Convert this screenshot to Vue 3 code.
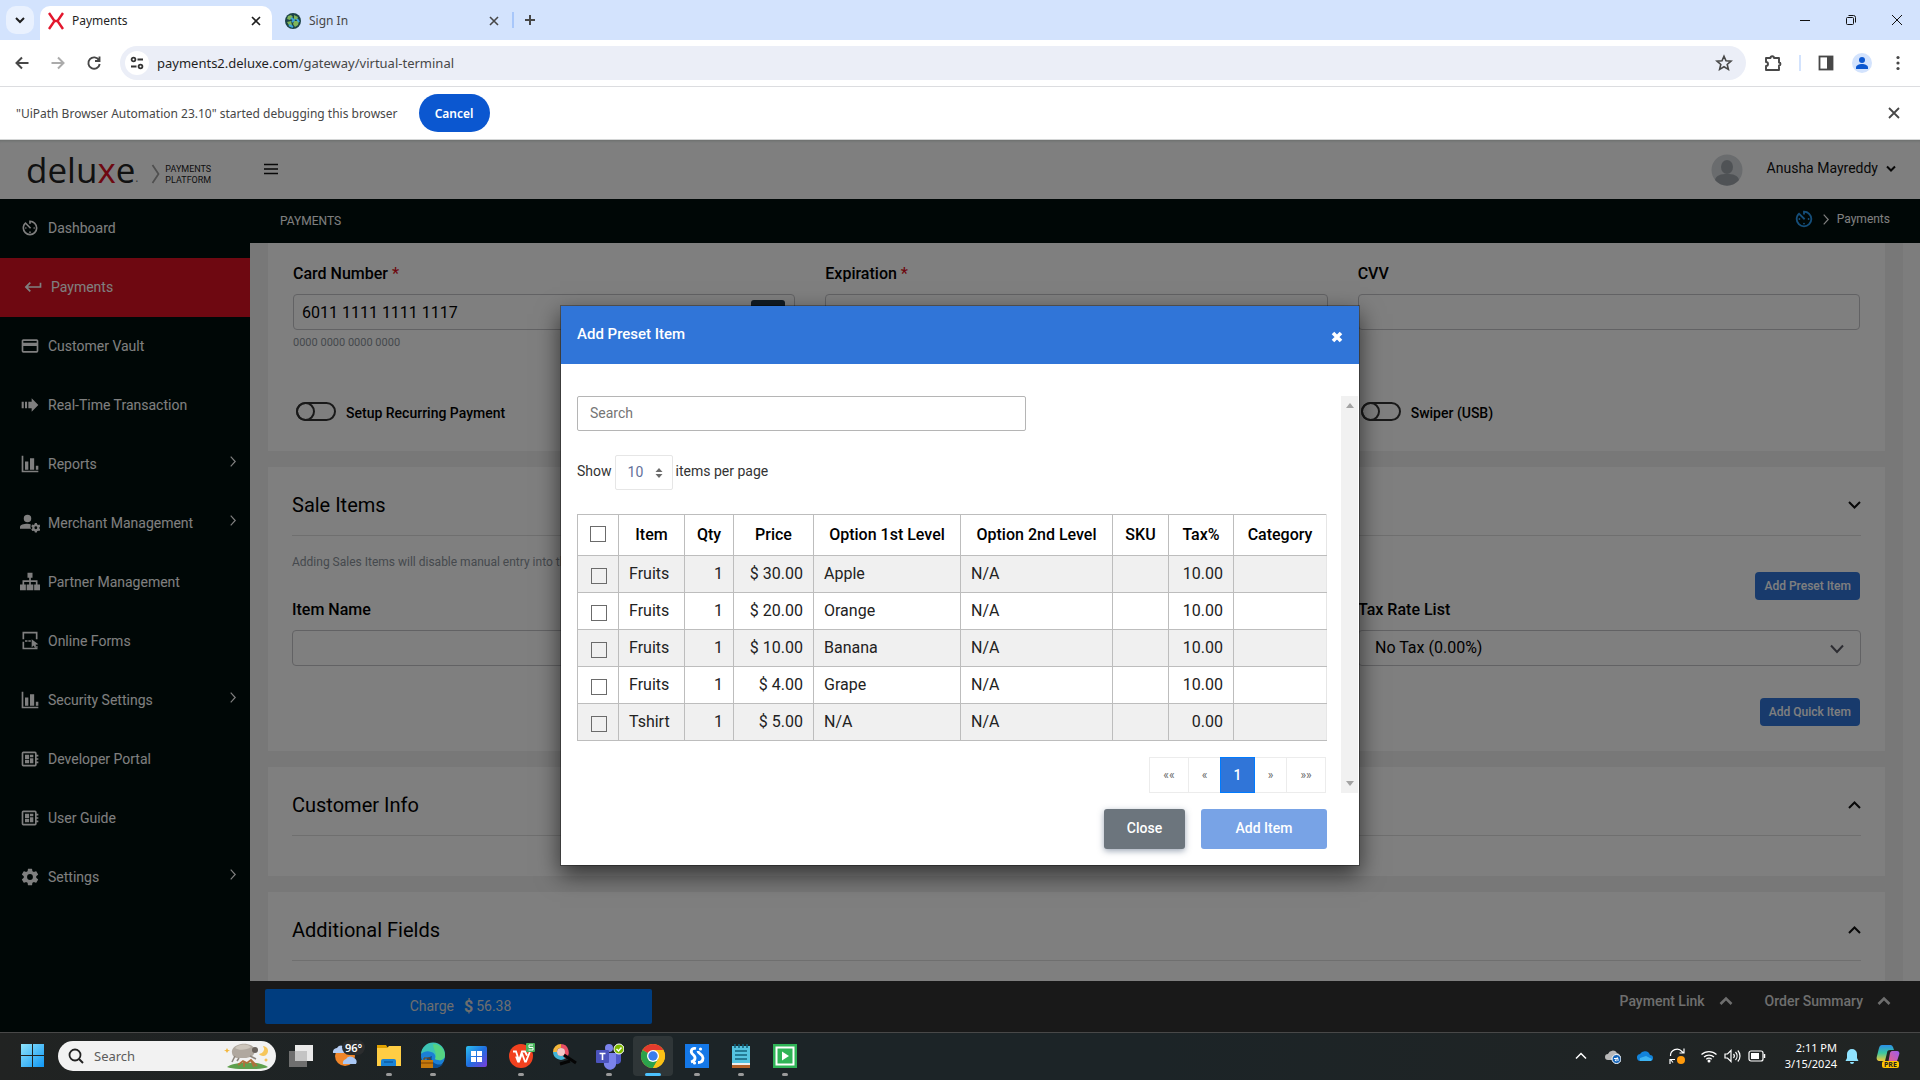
<script setup>
import { ref } from 'vue'

const timerPath = 'M11 17a1 1 0 0 0 1 1 1 1 0 0 0 1-1 1 1 0 0 0-1-1 1 1 0 0 0-1 1m0-14v4h2V5.08c3.39.49 6 3.39 6 6.92a7 7 0 0 1-7 7 7 7 0 0 1-7-7c0-1.68.59-3.22 1.58-4.42L12 13l1.41-1.41-6.8-6.8v.02C4.42 6.45 3 9.05 3 12a9 9 0 0 0 9 9 9 9 0 0 0 9-9 9 9 0 0 0-9-9m6 9a1 1 0 0 0-1-1 1 1 0 0 0-1 1 1 1 0 0 0 1 1 1 1 0 0 0 1-1M6 12a1 1 0 0 0 1 1 1 1 0 0 0 1-1 1 1 0 0 0-1-1 1 1 0 0 0-1 1z'
const cardPath = 'M20 8H4V6h16m0 12H4v-6h16m0-8H4c-1.11 0-2 .89-2 2v12a2 2 0 0 0 2 2h16a2 2 0 0 0 2-2V6c0-1.11-.89-2-2-2z'
const returnPath = 'M20 7v4H6l3.500-3.500L8 6l-6 6 6 6 1.500-1.500L6 13h16V7z'
const stepPath = 'M2 8h2.500v8H2zM6 8h2.500v8H6zM10 8h4V4l8 8-8 8v-4h-4z'
const chartPath = 'M2 2h2v18h18v2H2zM6 9h4v10H6zM12 5h5v14h-5zM19 14h3v5h-3z'
const userCogPath = 'M9 2a4.500 4.500 0 1 1 0 9 4.500 4.500 0 0 1 0-9zM9 13c1.500 0 3 .2 4 .7-.6 1.500-.7 3.800.3 5.300H0v-2c0-2.700 4.500-4 9-4zM17.800 12h2.400l.3 1.600 1.300.7 1.500-.5 1.200 2.100-1.200 1.100v1.500l1.200 1.100-1.200 2.100-1.500-.5-1.300.7-.3 1.600h-2.400l-.3-1.600-1.300-.7-1.500.5-1.200-2.100 1.200-1.100V17l-1.200-1.100 1.200-2.100 1.500.5 1.300-.7zM19 16a1.700 1.700 0 1 0 0 3.400 1.700 1.700 0 0 0 0-3.400z'
const sitemapPath = 'M9 1h6v6h-2v3h8v5h3v7h-7v-7h2v-3h-6v3h3v7H8v-7h3v-3H5v3h2v7H0v-7h3v-5h8V7H9z'
const formPath = 'M3 1h18v9h-2V3H5v7H3zM3 13h2v7h14v-2h2v4H3zM6 11h3v2H6zM10 11h3v2h-3zM14 10l8 6-3.500.5 1.500 3-2 1-1.500-3-2.500 2z'
const boardPath = 'M22 9V7h-2V5a2 2 0 0 0-2-2H4a2 2 0 0 0-2 2v14a2 2 0 0 0 2 2h14a2 2 0 0 0 2-2v-2h2v-2h-2v-2h2v-2h-2V9h2m-4 10H4V5h14v14M6 13h5v4H6v-4m6-6h4v3h-4V7M6 7h5v5H6V7m6 4h4v6h-4v-6z'
const cogPath = 'M12 15.5A3.5 3.5 0 0 1 8.5 12 3.5 3.5 0 0 1 12 8.500a3.5 3.5 0 0 1 3.5 3.5 3.5 3.5 0 0 1-3.5 3.500m7.430-2.530c.04-.32.07-.64.07-.97 0-.33-.03-.66-.07-1l2.110-1.630c.19-.15.24-.42.12-.64l-2-3.460c-.12-.22-.39-.31-.61-.22l-2.490 1c-.52-.39-1.060-.73-1.690-.98l-.37-2.650A.506.506 0 0 0 14 2h-4c-.25 0-.46.18-.5.42l-.37 2.650c-.63.25-1.170.59-1.690.98l-2.490-1c-.22-.09-.49 0-.61.22l-2 3.460c-.13.22-.07.49.12.64L4.570 11c-.04.34-.07.67-.07 1 0 .33.03.65.07.97l-2.110 1.660c-.19.15-.25.42-.12.64l2 3.460c.12.22.39.3.61.22l2.490-1.010c.52.4 1.060.74 1.690.99l.37 2.650c.04.24.25.42.5.42h4c.25 0 .46-.18.5-.42l.37-2.650c.63-.26 1.170-.59 1.690-.99l2.490 1.010c.22.08.49 0 .61-.22l2-3.460c.12-.22.07-.49-.12-.64l-2.110-1.660z'

const menu = [
  { label: 'Dashboard', icon: timerPath },
  { label: 'Payments', icon: returnPath, active: true },
  { label: 'Customer Vault', icon: cardPath },
  { label: 'Real-Time Transaction', icon: stepPath },
  { label: 'Reports', icon: chartPath, sub: true },
  { label: 'Merchant Management', icon: userCogPath, sub: true },
  { label: 'Partner Management', icon: sitemapPath },
  { label: 'Online Forms', icon: formPath },
  { label: 'Security Settings', icon: chartPath, sub: true },
  { label: 'Developer Portal', icon: boardPath },
  { label: 'User Guide', icon: boardPath },
  { label: 'Settings', icon: cogPath, sub: true },
]

const items = ref([
  { name: 'Fruits', qty: 1, price: '$ 30.00', first: 'Apple', second: 'N/A', sku: '', tax: '10.00', category: '', picked: false },
  { name: 'Fruits', qty: 1, price: '$ 20.00', first: 'Orange', second: 'N/A', sku: '', tax: '10.00', category: '', picked: false },
  { name: 'Fruits', qty: 1, price: '$ 10.00', first: 'Banana', second: 'N/A', sku: '', tax: '10.00', category: '', picked: false },
  { name: 'Fruits', qty: 1, price: '$ 4.00', first: 'Grape', second: 'N/A', sku: '', tax: '10.00', category: '', picked: false },
  { name: 'Tshirt', qty: 1, price: '$ 5.00', first: 'N/A', second: 'N/A', sku: '', tax: '0.00', category: '', picked: false },
])
const cardNumber = ref('6011 1111 1111 1117')
const search = ref('')
</script>

<template>
  <div class="screen">
    <div class="tabstrip">
      <button class="tab-search" aria-label="Search tabs">
        <svg width="10" height="10" viewBox="0 0 10 10"><path d="M1 3l4 4 4-4" fill="none" stroke="#1f1f1f" stroke-width="2" /></svg>
      </button>
      <div class="tab current">
        <svg width="16" height="18" viewBox="0 0 16 18"><path d="M1 1l5.500 8L1 17M15 1L9.500 9l5.500 8M6 9h4" fill="none" stroke="#e3172d" stroke-width="2.400" /></svg>
        <span>Payments</span>
        <button aria-label="Close tab"><svg width="10" height="10" viewBox="0 0 10 10"><path d="M1 1l8 8M9 1L1 9" stroke="#1f1f1f" stroke-width="1.600" /></svg></button>
      </div>
      <div class="tab">
        <svg width="16" height="16" viewBox="0 0 16 16">
          <circle cx="8" cy="8" r="8" fill="#1d4448" />
          <path d="M3 3l3-1 2 2-3 3-3-1zM9 2l4 2-1 3-3-1zM2 9l4-1 1 4-2 2zM9 8l5 0-1 4-3 2-2-3z" fill="#7fb55a" />
          <path d="M6 5l3 2-2 2M12 6l2 3M4 12l4 2" stroke="#3da5dc" stroke-width="2" fill="none" />
        </svg>
        <span>Sign In</span>
        <button aria-label="Close tab"><svg width="10" height="10" viewBox="0 0 10 10"><path d="M1 1l8 8M9 1L1 9" stroke="#474747" stroke-width="1.600" /></svg></button>
      </div>
      <i class="tab-sep"></i>
      <button class="new-tab" aria-label="New tab"><svg width="12" height="12" viewBox="0 0 12 12"><path d="M6 1v10M1 6h10" stroke="#474747" stroke-width="2" /></svg></button>
      <div class="win-controls">
        <svg width="10" height="10" viewBox="0 0 10 10"><path d="M0 5.500h10" stroke="#111" /></svg>
        <svg width="10" height="10" viewBox="0 0 10 10"><path d="M.5 3.500a1 1 0 0 1 1-1h5a1 1 0 0 1 1 1v5a1 1 0 0 1-1 1h-5a1 1 0 0 1-1-1zM2.500.5h5a2 2 0 0 1 2 2v5" fill="none" stroke="#111" /></svg>
        <svg width="10" height="10" viewBox="0 0 10 10"><path d="M0 0l10 10M10 0L0 10" stroke="#111" /></svg>
      </div>
    </div>

    <div class="toolbar">
      <svg width="16" height="16" viewBox="0 0 16 16"><path d="M14.500 8H3M8 2.500L2.500 8 8 13.500" fill="none" stroke="#474747" stroke-width="2" /></svg>
      <svg width="16" height="16" viewBox="0 0 16 16"><path d="M1.500 8H13M8 2.500L13.500 8 8 13.500" fill="none" stroke="#ababab" stroke-width="2" /></svg>
      <svg width="16" height="16" viewBox="0 0 16 16"><path d="M13 5.200A5.700 5.700 0 1 0 13.700 9M13.500 1.500v4.500H9" fill="none" stroke="#474747" stroke-width="1.900" /></svg>
      <div class="omnibox">
        <span class="site-info">
          <svg width="14" height="14" viewBox="0 0 14 14"><g fill="none" stroke="#333" stroke-width="1.800"><circle cx="3.500" cy="3.500" r="1.900" /><path d="M7.500 3.500H13M1 10.500h5.500" /><circle cx="10.500" cy="10.500" r="1.900" /></g></svg>
        </span>
        <span class="url"><b>payments2.deluxe.com</b>/gateway/virtual-terminal</span>
        <svg width="18" height="18" viewBox="0 0 18 18"><path d="M9 2.200l2 4.600 5 .4-3.800 3.300 1.200 4.900L9 12.800l-4.400 2.600 1.200-4.900L2 7.200l5-.4z" fill="none" stroke="#474747" stroke-width="1.600" /></svg>
      </div>
      <div class="tools">
        <svg width="18" height="18" viewBox="0 0 18 18"><path d="M2 4h4.500a1.700 1.700 0 0 1 3.500 0h5v4.500a1.500 1.500 0 0 1 0 3V16H2v-4a2 2 0 0 0 0-4z" fill="none" stroke="#474747" stroke-width="1.900" stroke-linejoin="round" /></svg>
        <i class="tool-sep"></i>
        <svg width="16" height="16" viewBox="0 0 16 16"><rect x="1.500" y="1.500" width="13" height="13" fill="none" stroke="#474747" stroke-width="1.800" /><path d="M9 1h6v14H9z" fill="#474747" /></svg>
        <svg width="20" height="20" viewBox="0 0 20 20"><circle cx="10" cy="10" r="10" fill="#d3e3fd" /><circle cx="10" cy="7" r="3" fill="#0b57d0" /><path d="M4 16v-1.500c0-2 3-3.500 6-3.500s6 1.500 6 3.500V16z" fill="#0b57d0" /></svg>
        <svg width="16" height="16" viewBox="0 0 16 16"><g fill="#474747"><circle cx="8" cy="2.500" r="1.600" /><circle cx="8" cy="8" r="1.600" /><circle cx="8" cy="13.500" r="1.600" /></g></svg>
      </div>
    </div>

    <div class="infobar">
      <span>"UiPath Browser Automation 23.10" started debugging this browser</span>
      <button class="cancel">Cancel</button>
      <button class="info-close" aria-label="Dismiss"><svg width="12" height="12" viewBox="0 0 12 12"><path d="M1 1l10 10M11 1L1 11" stroke="#474747" stroke-width="1.800" /></svg></button>
    </div>

    <div class="page">
      <header class="site-head">
        <div class="brand">
          <span class="word">delu<em>x</em>e</span><sup>.</sup>
          <svg width="10" height="20" viewBox="0 0 10 20"><path d="M1.500 1l6 9-6 9" fill="none" stroke="#a0a0a0" stroke-width="1.800" /></svg>
          <span class="platform">PAYMENTS<br>PLATFORM</span>
        </div>
        <button class="burger" aria-label="Toggle menu"><svg width="14" height="12" viewBox="0 0 14 12"><path d="M0 1.500h14M0 6h14M0 10.500h14" stroke="#111" stroke-width="1.600" /></svg></button>
        <div class="account">
          <svg width="32" height="32" viewBox="0 0 32 32"><circle cx="16" cy="16" r="15.500" fill="#d4d8dc" /><ellipse cx="16" cy="13" rx="6" ry="7" fill="#9fa5ab" /><path d="M4 26c1-5 6-6 12-6s11 1 12 6a15.500 15.500 0 0 1-24 0z" fill="#9fa5ab" /></svg>
          <span>Anusha Mayreddy</span>
          <svg class="caret" width="10" height="8" viewBox="0 0 10 8"><path d="M1 1.500l4 4 4-4" fill="none" stroke="#111" stroke-width="2" /></svg>
        </div>
      </header>

      <div class="columns">
        <nav class="sidebar">
          <a v-for="m in menu" :key="m.label" href="#" :class="{ active: m.active }">
            <svg width="20" height="20" viewBox="0 0 24 24"><path :d="m.icon" fill="currentColor" fill-rule="evenodd" /></svg>
            <span>{{ m.label }}</span>
            <svg v-if="m.sub" class="arrow" width="6" height="11" viewBox="0 0 6 11"><path d="M.7.7l4.500 4.800L.7 10.300" fill="none" stroke="currentColor" stroke-width="1.200" /></svg>
          </a>
        </nav>

        <main class="main">
          <div class="crumbs">
            <span>PAYMENTS</span>
            <div class="trail">
              <svg width="22" height="22" viewBox="0 0 24 24"><path :d="timerPath" fill="#2a9df4" /></svg>
              <svg width="6" height="11" viewBox="0 0 6 11"><path d="M.7.7l4.500 4.800L.7 10.300" fill="none" stroke="#fff" stroke-width="1.200" /></svg>
              <a href="#">Payments</a>
            </div>
          </div>

          <div class="scroller">
            <div class="cards">
              <section class="card card-pay">
                <div class="grid">
                  <div class="field">
                    <label for="cc">Card Number <em>*</em></label>
                    <div class="with-brand"><input id="cc" v-model="cardNumber" type="text"><i class="brand-chip"></i></div>
                    <small>0000 0000 0000 0000</small>
                  </div>
                  <div class="field">
                    <label for="exp">Expiration <em>*</em></label>
                    <input id="exp" type="text">
                  </div>
                  <div class="field">
                    <label for="cvv">CVV</label>
                    <input id="cvv" type="text">
                  </div>
                </div>
                <div class="grid toggles">
                  <label class="toggle"><input type="checkbox"><i></i><span>Setup Recurring Payment</span></label>
                  <div></div>
                  <label class="toggle"><input type="checkbox"><i></i><span>Swiper (USB)</span></label>
                </div>
              </section>

              <section class="card card-sale">
                <div class="card-head">
                  <h2>Sale Items</h2>
                  <svg width="14" height="10" viewBox="0 0 14 10"><path d="M2 2l5.500 5.500L13 2" fill="none" stroke="#111" stroke-width="2" /></svg>
                </div>
                <p class="hint">Adding Sales Items will disable manual entry into the amount field.</p>
                <div class="actions"><button class="btn-sm">Add Preset Item</button></div>
                <div class="grid">
                  <div class="field">
                    <label for="iname">Item Name</label>
                    <input id="iname" type="text">
                  </div>
                  <div></div>
                  <div class="field">
                    <label for="taxrate">Tax Rate List</label>
                    <div class="select-wrap">
                      <select id="taxrate"><option>No Tax (0.00%)</option></select>
                      <svg width="14" height="10" viewBox="0 0 14 10"><path d="M1 1.500l6 6.500 6-6.500" fill="none" stroke="#5a5a64" stroke-width="2" /></svg>
                    </div>
                  </div>
                </div>
                <div class="actions quick"><button class="btn-sm">Add Quick Item</button></div>
              </section>

              <section class="card card-info">
                <div class="card-head">
                  <h2>Customer Info</h2>
                  <svg width="14" height="10" viewBox="0 0 14 10"><path d="M2 8l5.500-5.500L13 8" fill="none" stroke="#111" stroke-width="2" /></svg>
                </div>
              </section>

              <section class="card card-info">
                <div class="card-head">
                  <h2>Additional Fields</h2>
                  <svg width="14" height="10" viewBox="0 0 14 10"><path d="M2 8l5.500-5.500L13 8" fill="none" stroke="#111" stroke-width="2" /></svg>
                </div>
              </section>
            </div>
            <div class="page-track"></div>
          </div>

          <footer class="paybar">
            <button class="charge"><span>Charge</span><b>$</b><span>56.38</span></button>
            <div class="pay-links">
              <a href="#">Payment Link <svg width="14" height="10" viewBox="0 0 14 10"><path d="M1.500 8L7 2.500 12.500 8" fill="none" stroke="currentColor" stroke-width="2.600" /></svg></a>
              <a href="#">Order Summary <svg width="14" height="10" viewBox="0 0 14 10"><path d="M1.500 8L7 2.500 12.500 8" fill="none" stroke="currentColor" stroke-width="2.600" /></svg></a>
            </div>
          </footer>
        </main>
      </div>

      <div class="backdrop">
        <div class="modal" role="dialog" aria-labelledby="dlg-title">
          <div class="modal-head">
            <h1 id="dlg-title">Add Preset Item</h1>
            <button aria-label="Close dialog"><svg width="12" height="12" viewBox="0 0 12 12"><path d="M2 2l8 8M10 2l-8 8" stroke="#fff" stroke-width="3.600" /></svg></button>
          </div>
          <div class="modal-body">
            <div class="modal-content">
              <input v-model="search" class="search" type="text" placeholder="Search" aria-label="Search">
              <div class="per-page">
                <label for="pp">Show</label>
                <span class="pp-wrap">
                  <select id="pp"><option>10</option></select>
                  <svg width="8" height="10" viewBox="0 0 8 10"><path d="M4 0l3.500 4h-7zM4 10L.5 6h7z" fill="#6b6b6b" /></svg>
                </span>
                <label for="pp">items per page</label>
              </div>
              <table>
                <colgroup><col class="c1"><col class="c2"><col class="c3"><col class="c4"><col class="c5"><col class="c6"><col class="c7"><col class="c8"><col></colgroup>
                <thead>
                  <tr>
                    <th><input type="checkbox" aria-label="Select all"></th>
                    <th>Item</th><th>Qty</th><th>Price</th><th>Option 1st Level</th><th>Option 2nd Level</th><th>SKU</th><th>Tax%</th><th>Category</th>
                  </tr>
                </thead>
                <tbody>
                  <tr v-for="(it, i) in items" :key="i">
                    <td class="tick"><input v-model="it.picked" type="checkbox" :aria-label="'Select ' + it.first"></td>
                    <td>{{ it.name }}</td>
                    <td class="num">{{ it.qty }}</td>
                    <td class="num">{{ it.price }}</td>
                    <td>{{ it.first }}</td>
                    <td>{{ it.second }}</td>
                    <td>{{ it.sku }}</td>
                    <td class="num">{{ it.tax }}</td>
                    <td>{{ it.category }}</td>
                  </tr>
                </tbody>
              </table>
              <div class="pager">
                <button class="wide">««</button><button>«</button><button class="on">1</button><button>»</button><button class="wide">»»</button>
              </div>
            </div>
            <div class="track">
              <svg width="8" height="5" viewBox="0 0 8 5"><path d="M4 0l4 5H0z" fill="#a3a3a3" /></svg>
              <svg width="8" height="5" viewBox="0 0 8 5"><path d="M0 0h8L4 5z" fill="#a3a3a3" /></svg>
            </div>
          </div>
          <div class="modal-foot">
            <button class="close-btn">Close</button>
            <button class="add-btn">Add Item</button>
          </div>
        </div>
      </div>
    </div>

    <div class="taskbar">
      <div class="start">
        <svg width="24" height="24" viewBox="0 0 24 24">
          <defs><linearGradient id="win" x1="0" y1="0" x2="1" y2="1"><stop offset="0" stop-color="#8fe4fb" /><stop offset="1" stop-color="#0f97f5" /></linearGradient></defs>
          <path d="M0 0h11v11H0zM12 0h11v11H12zM0 12h11v11H0zM12 12h11v11H12z" fill="url(#win)" />
        </svg>
      </div>
      <label class="task-search">
        <svg width="16" height="16" viewBox="0 0 16 16"><circle cx="7" cy="7" r="5.500" fill="none" stroke="#222" stroke-width="1.800" /><path d="M11 11l4 4" stroke="#222" stroke-width="2" /></svg>
        <input type="text" placeholder="Search" aria-label="Search Windows">
        <svg width="50" height="26" viewBox="0 0 50 26">
          <path d="M3 24c8-6 32-6 41 0-6 3-34 3-41 0z" fill="#5fa04d" />
          <path d="M39 3a5 5 0 1 1-4 8 5 5 0 0 0 4-8z" fill="#f6c65b" />
          <path d="M3 5l1 2 2 .5-2 .7L3 10l-1-1.800L0 7.500 2 7zM42 15l.8 1.500 1.600.4-1.600.5L42 19l-.8-1.600-1.600-.5 1.600-.4z" fill="#f3b63b" />
          <path d="M8 10c-1-5 4-8 9-9 6-1 13 1 14 6 0 6-5 8-11 8S9 16 8 10z" fill="#b0a89f" />
          <path d="M11 5c3-4 12-5 16-1-4 3-12 4-16 1z" fill="#cdc6bc" />
          <circle cx="31" cy="7" r="3" fill="#6a625c" />
          <path d="M11 13l-3 6M15 15l-2 3M26 13l6 3" stroke="#8f877f" stroke-width="1.600" />
          <path d="M14 22l5-4 4 2 4-3 6 6M20 19v5M27 17l3 7" stroke="#b0703c" stroke-width="1.800" fill="none" />
        </svg>
      </label>
      <div class="apps">
        <span class="app"><svg width="28" height="28" viewBox="0 0 28 28"><path d="M8 3h18v16H8z" fill="#e9e9e9" /><path d="M2 9h18v16H2z" fill="#6f6f6f" /><path d="M8 9h12v10H8z" fill="#c4c4c4" /></svg></span>
        <span class="app weather">
          <svg width="28" height="28" viewBox="0 0 28 28"><circle cx="14" cy="14" r="10" fill="#f0862a" /><path d="M2 11a4 4 0 0 1 4-5 5 5 0 0 1 9 1v4z" fill="#b5cdf3" /><path d="M12 22a4 4 0 0 1 3-5 5 5 0 0 1 8-1 4 4 0 0 1 2 6z" fill="#a9c7f5" /></svg>
          <b>96°</b>
        </span>
        <span class="app run"><svg width="28" height="28" viewBox="0 0 28 28"><path d="M2 3h9l2 3h-9v4H2z" fill="#e0a100" /><path d="M2 6h10l2-2h12v20H2z" fill="#ffcd44" /><path d="M6 24v-5a2 2 0 0 1 2-2h11a2 2 0 0 1 2 2v5z" fill="#1a83d6" /><path d="M9 20h9" stroke="#0c5ca3" stroke-width="1.500" /></svg></span>
        <span class="app run">
          <svg width="28" height="28" viewBox="0 0 28 28"><circle cx="14" cy="14" r="12" fill="#1b7fd6" /><path d="M2 12a12 12 0 0 1 24 1c0 6-7 6-10 4 3-6-8-11-14-5z" fill="#3cc3b4" /><path d="M14 2a12 12 0 0 1 12 11c0 6-7 6-10 4 3-6-2-9-2-15z" fill="#5fdc6c" opacity=".7" /><path d="M13 14c-2 6 4 10 11 8-6 8-18 3-16-6z" fill="#0c4f94" /><path d="M2 18h12v8H2z" fill="#c4790d" /><path d="M5 18v-2h6v2M2 21h12" stroke="#7d4300" fill="none" /></svg>
        </span>
        <span class="app"><svg width="28" height="28" viewBox="0 0 28 28"><defs><linearGradient id="sto" x1="0" y1="0" x2="1" y2="1"><stop offset="0" stop-color="#2dc0f0" /><stop offset=".5" stop-color="#1f6fe0" /><stop offset="1" stop-color="#7d3cd8" /></linearGradient></defs><rect x="3" y="4" width="21" height="21" rx="2" fill="url(#sto)" /><path d="M8 9h5v5H8zM14 9h5v5h-5zM8 15h5v5H8zM14 15h5v5h-5z" fill="#fff" /></svg></span>
        <span class="app run"><svg width="28" height="28" viewBox="0 0 28 28"><circle cx="14" cy="14" r="12" fill="#f2411f" /><path d="M6 9.500h3l3 9 3-9h3l2 4M9 14.500l2 5h1l3-8 3 8h1l4-10" fill="none" stroke="#fff" stroke-width="1.800" /><rect x="19" y="1" width="9" height="9" rx="1" fill="#49b45c" /><path d="M26 3h-4v2.500h4V8h-4.500" fill="none" stroke="#fff" /></svg></span>
        <span class="app"><svg width="28" height="28" viewBox="0 0 28 28"><path d="M4 10a6 6 0 0 1 6-6" stroke="#f4b63a" stroke-width="4" fill="none" /><path d="M10 4a6 6 0 0 1 3 11" stroke="#e94f64" stroke-width="4" fill="none" /><path d="M4 10a6 6 0 0 0 9 5" stroke="#42b3d5" stroke-width="4" fill="none" /><circle cx="10" cy="10" r="4" fill="#f3c9c9" /><path d="M13 13l12 8M9 22l10-3" stroke="#050505" stroke-width="3" /></svg></span>
        <span class="app run"><svg width="30" height="28" viewBox="0 0 30 28"><circle cx="15" cy="6" r="4" fill="#7b83eb" /><path d="M9 11h13v9a6 6 0 0 1-12 3z" fill="#7b83eb" /><path d="M22 11h5v8a4 4 0 0 1-5 3z" fill="#5059c9" /><rect x="2" y="8" width="13" height="13" rx="1" fill="#4b53bc" /><path d="M5.500 11.500h6M8.500 11.500V18" stroke="#fff" stroke-width="1.600" /><circle cx="25" cy="7" r="5" fill="#7fba00" stroke="#fff" /><path d="M22.500 7l2 2 3-3.500" stroke="#fff" stroke-width="1.500" fill="none" /></svg></span>
        <span class="app run focus"><svg width="28" height="28" viewBox="0 0 28 28"><circle cx="14" cy="14" r="12" fill="#fbc116" /><path d="M14 14L3.600 8A12 12 0 0 1 24.400 8z" fill="#e33b2e" /><path d="M14 14L3.600 8A12 12 0 0 0 14 26l5.200-9z" fill="#2ba24c" /><path d="M14 8h10.400A12 12 0 0 1 14 26l5.200-9z" fill="#fbc116" /><circle cx="14" cy="14" r="6" fill="#fff" /><circle cx="14" cy="14" r="4.700" fill="#3a7cec" /></svg></span>
        <span class="app run"><svg width="28" height="28" viewBox="0 0 28 28"><rect x="2" y="2" width="24" height="24" fill="#1478e8" /><path d="M13 6.500c-5-1-6 3.500-3 6s3 6-2 7.500M15 9c0 3 5 3 5 7 0 3-2 4.500-5 4.500" fill="none" stroke="#fff" stroke-width="2.800" /><circle cx="17.500" cy="7" r="1.600" fill="#fff" /><circle cx="11.500" cy="21" r="1.600" fill="#fff" /></svg></span>
        <span class="app run"><svg width="28" height="28" viewBox="0 0 28 28"><path d="M5 4h18v20H5z" fill="#55c3e0" /><path d="M5 22h18v4H5z" fill="#b5622a" /><path d="M5 21h18v2H5z" fill="#eee" /><path d="M8 2v4M12 2v4M16 2v4M20 2v4" stroke="#15637c" stroke-width="1.600" /><path d="M8 9h12M8 13h12M8 17h12" stroke="#15637c" stroke-width="1.600" /></svg></span>
        <span class="app run"><svg width="28" height="28" viewBox="0 0 28 28"><rect x="2" y="2" width="24" height="24" fill="#2fb457" /><rect x="5.500" y="5.500" width="17" height="17" fill="none" stroke="#fff" stroke-width="2" /><path d="M11 9.500l7 4.500-7 4.500z" fill="#fff" /></svg></span>
      </div>
      <div class="tray">
        <svg width="12" height="8" viewBox="0 0 12 8"><path d="M1 6.500l5-5 5 5" fill="none" stroke="#fff" stroke-width="1.500" /></svg>
        <span class="tray-icons">
          <svg width="16" height="16" viewBox="0 0 16 16"><path d="M3 12a3 3 0 0 1 0-6 5 5 0 0 1 9-1 4 4 0 0 1 2 7z" fill="#b8b8b8" /><circle cx="11.500" cy="11" r="4.500" fill="#1464b8" stroke="#fff" /><path d="M9 10.500h4l-1-1.300M14 12h-4l1 1.300" stroke="#fff" fill="none" /></svg>
          <svg width="16" height="16" viewBox="0 0 16 16"><path d="M4 13a3.500 3.500 0 0 1-1-7 5.500 5.500 0 0 1 10 1 3 3 0 0 1 0 6z" fill="#1283da" /><path d="M3 13a3 3 0 0 1 0-3l6-2 6 3-1 2z" fill="#3db4f2" /></svg>
          <svg width="16" height="18" viewBox="0 0 16 18"><path d="M1.500 9A6.500 6.500 0 0 1 13 4.500L14.500 6M15 1.500V6h-4.500M1 17v-4.500h5M2 13l2 2.500" fill="none" stroke="#fff" stroke-width="1.200" /><circle cx="12" cy="13" r="4" fill="#ff9a0c" /></svg>
        </span>
        <span class="tray-net">
          <svg width="18" height="14" viewBox="0 0 18 14"><g fill="none" stroke="#fff" stroke-width="1.300"><path d="M1.500 5.500a11 11 0 0 1 15 0M4 8a7.500 7.500 0 0 1 10 0M6.300 10.300a4 4 0 0 1 5.400 0" /></g><circle cx="9" cy="12" r="1.500" fill="#fff" /></svg>
          <svg width="18" height="14" viewBox="0 0 18 14"><g fill="none" stroke="#fff" stroke-width="1.200"><path d="M1 5h2.500L7 1.500v11L3.500 9H1zM9.500 5a3 3 0 0 1 0 4M11.500 3a6 6 0 0 1 0 8M13.800 1.500a8 8 0 0 1 0 11" /></g></svg>
          <svg width="18" height="12" viewBox="0 0 18 12"><rect x="1" y="1" width="14" height="10" rx="2" fill="none" stroke="#fff" stroke-width="1.200" /><path d="M3 3h8v6H3z" fill="#fff" /><path d="M16.500 4v4" stroke="#fff" stroke-width="1.500" /></svg>
        </span>
        <time>2:11 PM<br>3/15/2024</time>
        <svg class="bell" width="16" height="16" viewBox="0 0 16 16"><path d="M8 1a5 5 0 0 1 5 5v4l1.500 3h-13L3 10V6a5 5 0 0 1 5-5zM6 14h4a2 2 0 0 1-4 0z" fill="#8fe3ff" /></svg>
        <span class="copilot">
          <svg width="24" height="24" viewBox="0 0 24 24">
            <defs><linearGradient id="co1" x1="0" y1="0" x2="0" y2="1"><stop offset="0" stop-color="#2a8fe8" /><stop offset=".5" stop-color="#3cc6a0" /><stop offset="1" stop-color="#f3c838" /></linearGradient><linearGradient id="co2" x1="1" y1="0" x2="0" y2="1"><stop offset="0" stop-color="#9a5cf0" /><stop offset="1" stop-color="#f0607c" /></linearGradient></defs>
            <path d="M6 1h8c2 0 3 1 4 5h-4c-2 0-3 1-3 3l-2 8H4c-3 0-4-2-3-5l2-8c.5-2 1.500-3 3-3z" fill="url(#co1)" /><path d="M16 7h5c2 0 3 2 2 4l-2 6c-1 2-2 3-4 3h-5l2-11c.4-1 1-2 2-2z" fill="url(#co2)" />
          </svg>
          <b>PRE</b>
        </span>
      </div>
    </div>
  </div>
</template>

<style>
body { margin: 0; overflow: hidden; }
</style>

<style scoped>
* { box-sizing: border-box; }
button { border: 0; padding: 0; background: none; font: inherit; color: inherit; display: flex; align-items: center; justify-content: center; }
input, select { font: inherit; color: inherit; margin: 0; }
a { text-decoration: none; color: inherit; }
svg { display: block; flex: none; }
.screen { height: 100vh; display: flex; flex-direction: column; font-family: Roboto, "Liberation Sans", sans-serif; font-size: 14px; color: #000; overflow: hidden; }

/* Browser frame */
.tabstrip, .toolbar, .infobar, .taskbar { flex: none; font-family: "Noto Sans", "Open Sans", sans-serif; }
.tabstrip { height: 40px; background: #d3e3fd; display: flex; align-items: center; padding-left: 6px; font-size: 12px; color: #1f1f1f; }
.tab-search { width: 28px; height: 28px; border-radius: 10px; background: #e9f1fe; margin-right: 6px; }
.tab { width: 238px; height: 34px; align-self: flex-end; display: flex; align-items: center; gap: 8px; padding: 0 11px 5px 13px; color: #474747; }
.tab span { flex: 1; }
.tab.current { width: 232px; background: #fff; border-radius: 10px 10px 0 0; color: #1f1f1f; padding: 0 11px 5px 8px; }
.tab-sep { width: 2px; height: 16px; background: #a8c7fa; margin-left: 2px; }
.new-tab { width: 32px; height: 28px; }
.win-controls { margin-left: auto; display: flex; gap: 36px; padding-right: 18px; }
.toolbar { height: 47px; background: #fff; border-bottom: 1px solid #dcdde0; display: flex; align-items: center; gap: 20px; padding: 0 14px; }
.omnibox { flex: 1; height: 34px; margin-left: -2px; border-radius: 17px; background: #ebeef7; display: flex; align-items: center; padding: 0 13px 0 5px; color: #474747; }
.site-info { width: 24px; height: 24px; border-radius: 12px; background: #fff; display: flex; align-items: center; justify-content: center; margin-right: 8px; }
.url { flex: 1; font-size: 13px; }
.url b { font-weight: 400; color: #1f1f1f; }
.tools { display: flex; align-items: center; gap: 18px; margin-left: -2px; }
.tool-sep { width: 2px; height: 16px; background: #d3e3fd; margin: 0 -1px; }
.infobar { height: 53px; background: #fff; border-bottom: 1px solid #d4d6d6; display: flex; align-items: center; padding: 0 20px 0 16px; font-size: 12px; color: #474747; }
.cancel { width: 71px; height: 38px; border-radius: 19px; background: #0b57d0; color: #fff; font-weight: 600; margin-left: 21px; }
.info-close { margin-left: auto; }

/* Page */
.page { flex: 1; min-height: 0; position: relative; display: flex; flex-direction: column; overflow: hidden; background: #fff; }
.site-head { height: 59px; flex: none; display: flex; align-items: center; box-shadow: inset 0 3px 3px -2px #d2dad6; }
.brand { width: 264px; display: flex; align-items: center; padding-left: 26px; }
.word { font: 35px/40px "Open Sans", sans-serif; color: #222; }
.word em { font-style: normal; color: #dc1022; }
.brand sup { width: 6px; font: 12px/12px "Open Sans", sans-serif; color: #777; margin-top: 16px; }
.brand svg { margin: 9px 4px 0 10px; }
.platform { font-size: 9px; line-height: 11px; color: #222; margin-top: 10px; }
.burger { padding-bottom: 1px; }
.account { margin-left: auto; display: flex; align-items: center; padding-right: 24px; color: #111; }
.account span { margin: 0 8px 4px 24px; }
.caret { margin-bottom: 2px; }
.columns { flex: 1; min-height: 0; display: flex; }
.sidebar { width: 250px; flex: none; background: #000e0c; color: #fff; }
.sidebar a { height: 59px; display: flex; align-items: center; gap: 8px; padding: 0 14px 2px 20px; }
.sidebar a.active { background: #dc1022; padding-left: 23px; }
.sidebar span { flex: 1; }
.arrow { margin-bottom: 5px; }
.main { flex: 1; min-width: 0; display: flex; flex-direction: column; background: #f0f0f0; }
.crumbs { height: 44px; flex: none; background: #000e0c; color: #fff; display: flex; align-items: center; justify-content: space-between; padding: 0 30px; font-size: 12px; }
.trail { display: flex; align-items: center; gap: 8px; padding-bottom: 4px; }
.scroller { flex: 1; min-height: 0; display: flex; overflow: hidden; }
.cards { flex: 1; padding: 0 18px; display: flex; flex-direction: column; gap: 16px; }
.page-track { width: 17px; background: #fafafa; }
.card { background: #fff; flex: none; padding: 0 24px; }
.card-pay { height: 208px; padding: 21px 25px 0; }
.card-sale { height: 284px; }
.card-info { height: 109px; }
.grid { display: grid; grid-template-columns: repeat(3, 1fr); gap: 30px; }
.field { display: flex; flex-direction: column; }
.field label { font-size: 16px; line-height: 20px; font-weight: 500; margin-bottom: 10px; }
.field em { font-style: normal; color: #dc1022; }
.field input, .field select { width: 100%; height: 36px; border: 1px solid #c4c4c8; border-radius: 4px; background: #fff; font-size: 16px; padding: 0 8px; outline: 0; }
.field small { font-size: 11px; line-height: 16px; color: #8b939b; margin-top: 5px; }
.with-brand { position: relative; }
.brand-chip { position: absolute; right: 10px; top: 6px; width: 34px; height: 24px; border-radius: 3px; background: #22384a; }
.toggles { margin-top: 48px; }
.toggle { display: flex; align-items: center; padding-left: 3px; height: 28px; font-weight: 500; }
.toggle input { position: absolute; opacity: 0; }
.toggle i { width: 40px; height: 19px; border: 2px solid #333; border-radius: 10px; position: relative; margin: 0 10px 4px 0; }
.toggle i::after { content: ""; position: absolute; left: -2px; top: -2px; width: 15px; height: 15px; border: 2px solid #333; border-radius: 50%; }
.card-head { height: 69px; border-bottom: 1px solid #dedede; display: flex; align-items: center; justify-content: space-between; padding-top: 8px; }
.card-head h2 { font-size: 20px; line-height: 24px; font-weight: 400; margin: 0; }
.hint { font-size: 12px; line-height: 16px; color: #8b939b; margin: 18px 0 2px; }
.actions { display: flex; justify-content: flex-end; height: 28px; padding-right: 1px; }
.actions.quick { margin-top: 32px; }
.btn-sm { height: 28px; padding: 0 9px; border-radius: 4px; background: #3075d8; color: #fff; font-size: 12px; font-weight: 500; }
.select-wrap, .pp-wrap { position: relative; }
.select-wrap select, .pp-wrap select { appearance: none; }
.select-wrap select { padding: 0 16px 2px; }
.select-wrap svg { position: absolute; right: 17px; top: 14px; }
.paybar { height: 51px; flex: none; background: #333; display: flex; align-items: center; justify-content: space-between; padding: 0 29px 0 15px; color: #ddd; }
.charge { width: 387px; height: 35px; border-radius: 2px; background: #007bff; padding: 0 0 1px 4px; }
.charge b { margin: 0 3px 0 10px; font-size: 16px; }
.pay-links { display: flex; gap: 32px; padding-bottom: 11px; font-weight: 500; }
.pay-links a { display: flex; align-items: center; gap: 14px; }

/* Dialog */
.backdrop { position: absolute; inset: 0; background: rgba(0, 0, 0, .5); display: flex; align-items: flex-start; justify-content: center; }
.modal { width: 800px; margin-top: 165px; background: #fff; background-clip: padding-box; border: 1px solid rgba(0, 0, 0, .3); box-shadow: 0 9px 22px rgba(0, 0, 0, .6); }
.modal-head { height: 58px; background: #3075d8; color: #fff; display: flex; align-items: center; justify-content: space-between; padding: 0 16px; }
.modal-head h1 { font-size: 15px; line-height: 20px; font-weight: 500; margin: 0 0 2px; }
.modal-head button { margin-top: 4px; }
.modal-body { display: flex; justify-content: space-between; margin-top: 32px; padding: 0 1px 0 16px; }
.modal-content { width: 750px; }
.search { display: block; width: 449px; height: 35px; border: 1px solid #b5b5b5; border-radius: 2px; padding: 0 12px 2px; font-size: 14px; outline: 0; }
.search::placeholder { color: #757575; opacity: 1; }
.per-page { display: flex; align-items: center; gap: 3px; margin: 24px 0; color: #333; }
.per-page label { padding-bottom: 3px; }
.pp-wrap select { display: block; width: 58px; height: 35px; border: 1px solid #e6e6e6; border-radius: 2px; background: #fff; color: #63709a; padding: 0 12px 1px; }
.pp-wrap svg { position: absolute; right: 10px; top: 13px; }
table { width: 750px; border-collapse: collapse; table-layout: fixed; font-size: 16px; }
.c1 { width: 41px; }
.c2 { width: 66px; }
.c3 { width: 49px; }
.c4 { width: 80px; }
.c5 { width: 147px; }
.c6 { width: 152px; }
.c7 { width: 56px; }
.c8 { width: 65px; }
th, td { border: 1px solid #bdbdbd; padding: 0 10px; }
th:last-child, td:last-child { border-right-color: #e6e6e6; }
th { height: 41px; font-weight: 500; text-align: center; padding: 0 0 2px; }
td { height: 37px; color: #222; padding-bottom: 2px; }
tbody tr:nth-child(odd) { background: #f0f0f0; }
.num { text-align: right; }
table input { appearance: none; display: block; width: 16px; height: 16px; border: 1px solid #6b6b6b; background: #fff; margin: 0 auto; }
.tick { padding: 3px 0 0 1px; }
.tick input { background: none; }
.pager { display: flex; justify-content: flex-end; margin-top: 16px; padding-right: 1px; }
.pager button { width: 33px; height: 36px; border: 1px solid #ececec; margin-left: -1px; color: #6b6b6b; font-size: 12px; }
.pager .wide { width: 40px; }
.pager .on { width: 35px; background: #3075d8; border-color: #007bff; color: #fff; font-size: 14px; font-weight: 500; position: relative; }
.track { width: 17px; height: 397px; background: #f1f1f1; display: flex; flex-direction: column; align-items: center; justify-content: space-between; padding: 7px 0; }
.modal-foot { display: flex; justify-content: flex-end; gap: 16px; padding: 16px 32px 16px 0; color: #fff; font-weight: 500; }
.modal-foot button { height: 40px; border-radius: 3px; padding-bottom: 2px; }
.close-btn { width: 81px; background: #6c757d; box-shadow: 0 2px 6px rgba(60, 80, 110, .5); }
.add-btn { width: 126px; background: #78a3e6; }

/* Taskbar */
.taskbar { height: 48px; background: linear-gradient(90deg, #212322, #1c2427 30%, #1c2427 60%, #212423); border-top: 1px solid #484848; display: flex; align-items: center; color: #fff; padding-bottom: 1px; }
.start { width: 58px; padding-left: 21px; }
.task-search { width: 218px; height: 30px; border-radius: 15px; background: #f2f2f2; display: flex; align-items: center; padding: 0 2px 0 10px; margin-right: 3px; }
.task-search input { flex: 1; min-width: 0; border: 0; background: none; padding: 0 0 1px 10px; font-size: 13px; outline: 0; }
.task-search input::placeholder { color: #5c5c5c; opacity: 1; }
.apps { display: flex; }
.app { width: 44px; height: 40px; display: flex; align-items: center; justify-content: center; position: relative; }
.run::after { content: ""; position: absolute; bottom: 0; left: 19px; width: 6px; height: 3px; border-radius: 2px; background: #9a9a9a; }
.focus { background: #2f3638; border-radius: 4px; width: 40px; margin: 0 2px; }
.focus::after { left: 12px; width: 16px; background: #4cc2ff; }
.weather b { position: absolute; left: 19px; top: 4px; height: 15px; padding: 0 3px; border-radius: 8px; background: #2b2d2e; font-size: 11px; line-height: 15px; font-weight: 600; }
.tray { margin-left: auto; display: flex; align-items: center; padding-right: 20px; }
.tray-icons { display: flex; align-items: center; gap: 16px; margin: 0 15px 0 18px; }
.tray-net { display: flex; align-items: center; gap: 6px; }
time { width: 71px; text-align: right; font-size: 11px; line-height: 16px; }
.bell { margin: 0 16px 0 7px; }
.copilot { position: relative; }
.copilot b { position: absolute; left: 6px; bottom: 0; padding: 0 2px; border-radius: 2px; background: #ffc400; color: #222; font-size: 7px; line-height: 7px; }
</style>
